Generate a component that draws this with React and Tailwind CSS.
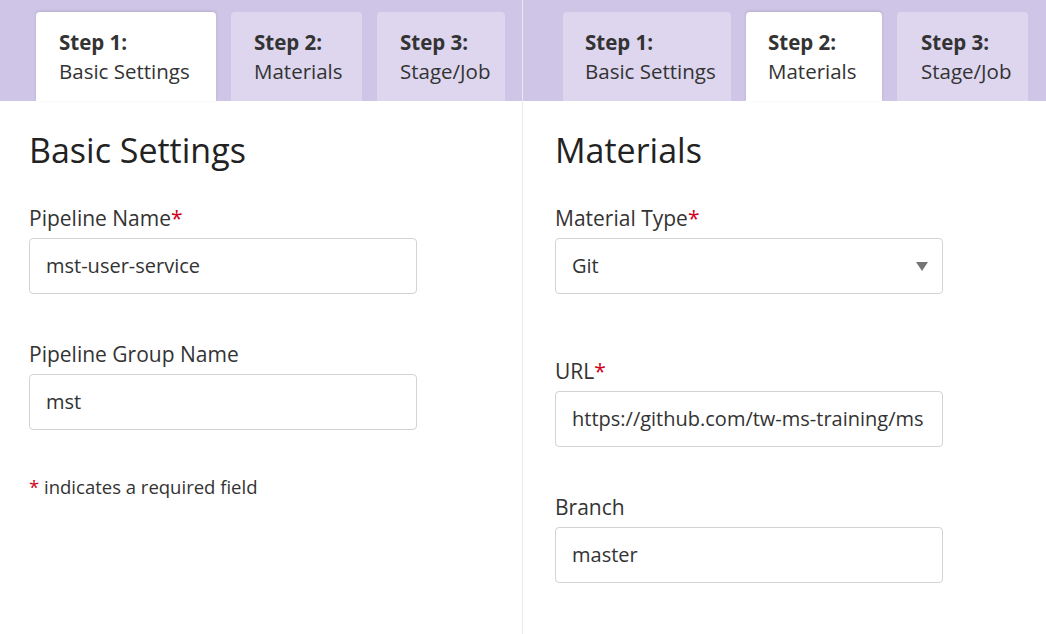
import React from "react";

const Req = () => <span className="text-[#d0021b]">*</span>;

function Tab({ step, name, active, width, pl }) {
  return (
    <div
      className={
        "h-[89px] rounded-t-[4px] pt-[16px] text-[20.5px] leading-[29px] text-[#333] whitespace-nowrap overflow-hidden " +
        (active ? "bg-white shadow-[0_-1px_3px_rgba(0,0,0,0.12)]" : "bg-[#ddd6ee]")
      }
      style={{ width, paddingLeft: pl }}
    >
      <div className="font-bold">{step}</div>
      <div>{name}</div>
    </div>
  );
}

function TabBar({ active, widths, pads, pad }) {
  const tabs = [
    ["Step 1:", "Basic Settings"],
    ["Step 2:", "Materials"],
    ["Step 3:", "Stage/Job"],
  ];
  return (
    <div className="h-[101px] bg-[#cfc5e6] flex items-end gap-[15px]" style={{ paddingLeft: pad }}>
      {tabs.map(([s, n], i) => (
        <Tab key={s} step={s} name={n} active={i === active} width={widths[i]} pl={pads[i]} />
      ))}
    </div>
  );
}

function Field({ label, required, value, mt, select }) {
  return (
    <div className={mt}>
      <div className="text-[21px] leading-[28px] text-[#333]">
        {label}
        {required && <Req />}
      </div>
      <div className="mt-[6px] h-[56px] w-[388px] rounded-[4px] border border-[#d3d3d3] bg-white flex items-center pl-[16px] pr-[14px] text-[20px] text-[#333] overflow-hidden whitespace-nowrap">
        <span className="flex-1">{value}</span>
        {select && (
          <svg width="12" height="9" viewBox="0 0 12 9" className="ml-2 shrink-0">
            <path d="M0 0 L12 0 L6 9 Z" fill="#757575" />
          </svg>
        )}
      </div>
    </div>
  );
}

export default function App() {
  return (
    <div
      className="flex w-[1046px] h-[634px] bg-white overflow-hidden"
      style={{ fontFamily: '"Open Sans", "Noto Sans", sans-serif' }}
    >
      {/* left: basic settings */}
      <div className="w-[522px] shrink-0">
        <TabBar active={0} widths={[180, 131, 128]} pads={[23, 23, 23]} pad={36} />
        <div className="pl-[29px] pt-[29px]">
          <h1 className="text-[34px] leading-[40px] text-[#222]">Basic Settings</h1>
          <Field label="Pipeline Name" required value="mst-user-service" mt="mt-[34px]" />
          <Field label="Pipeline Group Name" value="mst" mt="mt-[46px]" />
          <div className="mt-[44px] text-[18.5px] leading-[26px] text-[#333]">
            <Req /> indicates a required field
          </div>
        </div>
      </div>

      <div className="w-px bg-[#ebebeb] shrink-0" />

      {/* right: materials */}
      <div className="flex-1">
        <TabBar active={1} widths={[168, 136, 131]} pads={[22, 22, 24]} pad={40} />
        <div className="pl-[32px] pt-[29px]">
          <h1 className="text-[34px] leading-[40px] text-[#222]">Materials</h1>
          <Field label="Material Type" required value="Git" mt="mt-[34px]" select />
          <Field label="URL" required value="https://github.com/tw-ms-training/ms" mt="mt-[63px]" />
          <Field label="Branch" value="master" mt="mt-[46px]" />
        </div>
      </div>
    </div>
  );
}
